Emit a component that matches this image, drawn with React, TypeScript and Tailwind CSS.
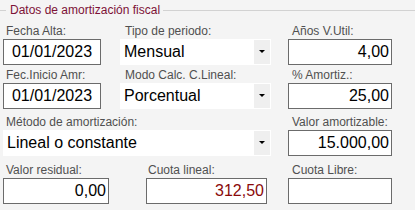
import React from "react";

const Label = ({ text, pad }: { text: string; pad: string }) => (
  <div className={`h-[15px] text-[12px] leading-[15px] text-[#505050] whitespace-nowrap ${pad}`}>{text}</div>
);

const Field = ({
  label,
  value,
  pad = "pl-[3px]",
  center = false,
  red = false,
}: {
  label: string;
  value?: string;
  pad?: string;
  center?: boolean;
  red?: boolean;
}) => (
  <div className="flex flex-col">
    <Label text={label} pad={pad} />
    <div
      className={`h-[26px] bg-white border border-[#6b6b6b] flex items-center text-[16px] pr-[2px] ${
        center ? "justify-center pl-[2px]" : "justify-end"
      } ${red ? "text-[#8a0a0a]" : "text-black"}`}
    >
      {value}
    </div>
  </div>
);

const Select = ({ label, value, pad = "pl-[5px]" }: { label: string; value: string; pad?: string }) => (
  <div className="flex flex-col">
    <Label text={label} pad={pad} />
    <div className="h-[26px] bg-white flex items-center">
      <span className="flex-1 pl-[4px] text-[16px] text-black whitespace-nowrap">{value}</span>
      <span className="w-[16px] h-[24px] mr-px bg-[#efefef] flex items-center justify-center">
        <svg width="6" height="4" viewBox="0 0 6 4">
          <path d="M0 0h6L3 3z" fill="#000" />
        </svg>
      </span>
    </div>
  </div>
);

export default function App() {
  return (
    <div className="w-[415px] h-[210px] bg-[#f4f4f4] overflow-hidden font-['Liberation_Sans',Arial,sans-serif]">
      {/* cabecera del grupo */}
      <div className="flex items-center h-[20px]">
        <span className="w-[6px] h-px bg-[#d2d2d2]" />
        <span className="ml-[4px] mr-[3px] text-[12px] leading-none text-[#7d1237] whitespace-nowrap">
          Datos de amortización fiscal
        </span>
        <span className="flex-1 h-px bg-[#d2d2d2]" />
      </div>

      <div className="flex mt-[4px]">
        {/* zona izquierda */}
        <div className="ml-[3px] w-[268px] flex flex-col">
          <div className="flex">
            <div className="w-[98px] flex flex-col gap-[3px]">
              <Field label="Fecha Alta:" value="01/01/2023" center />
              <Field label="Fec.Inicio Amr:" value="01/01/2023" center />
            </div>
            <div className="ml-[19px] w-[151px] flex flex-col gap-[3px]">
              <Select label="Tipo de periodo:" value="Mensual" />
              <Select label="Modo Calc. C.Lineal:" value="Porcentual" />
            </div>
          </div>
          <div className="mt-[6px]">
            <Select label="Método de amortización:" value="Lineal o constante" pad="pl-[3px]" />
          </div>
          <div className="mt-[7px] flex">
            <div className="w-[106px]">
              <Field label="Valor residual:" value="0,00" />
            </div>
            <div className="ml-[37px] w-[121px]">
              <Field label="Cuota lineal:" value="312,50" pad="pl-[2px]" red />
            </div>
          </div>
        </div>

        {/* columna derecha */}
        <div className="ml-[17px] w-[104px] flex flex-col">
          <Field label="Años V.Util:" value="4,00" pad="pl-[4px]" />
          <div className="mt-[3px]">
            <Field label="% Amortiz.:" value="25,00" pad="pl-[4px]" />
          </div>
          <div className="mt-[6px]">
            <Field label="Valor amortizable:" value="15.000,00" pad="pl-[4px]" />
          </div>
          <div className="mt-[7px]">
            <Field label="Cuota Libre:" pad="pl-[4px]" />
          </div>
        </div>
      </div>
    </div>
  );
}
